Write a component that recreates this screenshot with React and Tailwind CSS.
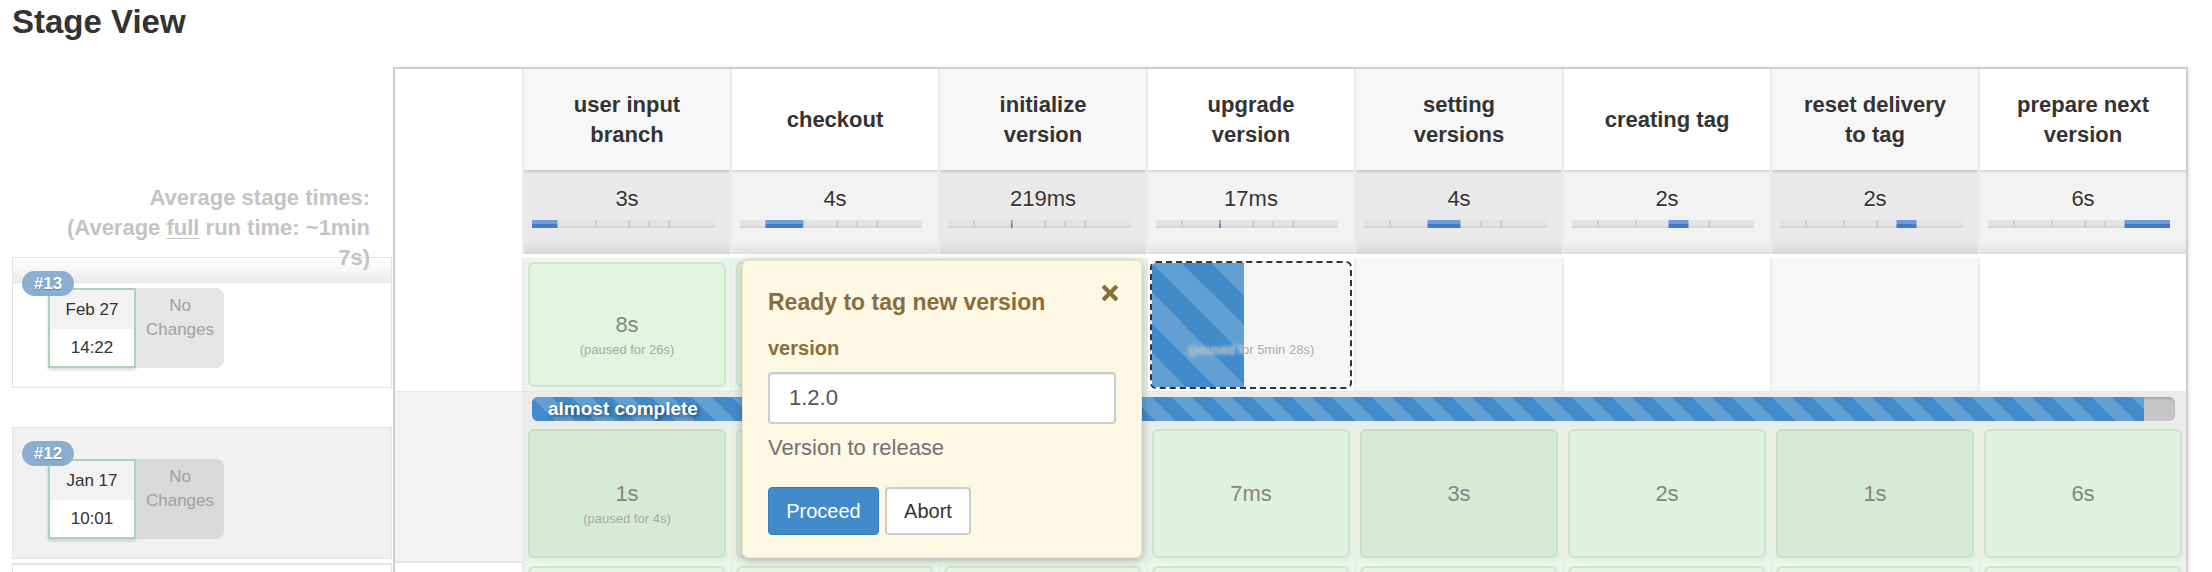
import React from 'react'

const stages = [
  { name: 'user input branch', avg: '3s', from: 0, to: 14 },
  { name: 'checkout', avg: '4s', from: 14, to: 34.6 },
  { name: 'initialize version', avg: '219ms', from: 34.6, to: 34.8 },
  { name: 'upgrade version', avg: '17ms', from: 34.8, to: 35 },
  { name: 'setting versions', avg: '4s', from: 35, to: 53 },
  { name: 'creating tag', avg: '2s', from: 53, to: 64 },
  { name: 'reset delivery to tag', avg: '2s', from: 64, to: 75 },
  { name: 'prepare next version', avg: '6s', from: 75, to: 100 }
]

const ticks = [14, 34.7, 53, 64, 75]

// cols 2 and 3 sit under the input popup
const run12 = [
  { d: '1s', p: '(paused for 4s)' },
  { d: '' },
  { d: '' },
  { d: '7ms' },
  { d: '3s' },
  { d: '2s' },
  { d: '1s' },
  { d: '6s' }
]

const stripes =
  'bg-[#428bca] bg-[linear-gradient(45deg,rgba(255,255,255,.17)_25%,transparent_25%,transparent_50%,rgba(255,255,255,.17)_50%,rgba(255,255,255,.17)_75%,transparent_75%,transparent)]'

function AvgBar({ from, to }) {
  const w = 182
  return (
    <svg width={w} height="8" className="block">
      <rect width={w} height="8" fill="#e3e3e3" />
      <rect y="6" width={w} height="2" fill="#d6d6d6" />
      {ticks
        .filter((t) => t < from || t > to)
        .map((t) => (
          <rect key={t} x={(t * w) / 100} y="1" width="1.2" height="6" fill="#c2c2c2" />
        ))}
      <rect x={(from * w) / 100} width={Math.max(((to - from) * w) / 100, 1.5)} height="4" fill="#6f9ddb" />
      <rect x={(from * w) / 100} y="4" width={Math.max(((to - from) * w) / 100, 1.5)} height="4" fill="#4479c4" />
    </svg>
  )
}

function BuildRow({ num, date, time, band, shaded }) {
  return (
    <div
      className={`relative w-[380px] border border-[#e3e3e3] ${
        shaded ? 'h-[132px] bg-[#f1f1f1]' : 'h-[131px] bg-white'
      }`}
    >
      {band && <div className="h-[25px] border-b border-[#e2e2e2] bg-gradient-to-b from-white to-[#ededed]" />}

      <span className="absolute left-[9px] top-[13px] z-10 flex h-[25px] w-[52px] items-center justify-center rounded-full bg-[#8aaed2] text-[17px] font-bold text-white [text-shadow:0_1px_1px_rgba(0,0,0,0.25)]">
        {num}
      </span>

      <div className={`ml-[35px] flex ${band ? 'mt-[5px]' : 'mt-[31px]'}`}>
        <div className="w-[88px] border-2 border-[#a8d4b9] bg-white text-center text-[17px] text-[#333] shadow-[0_2px_3px_rgba(0,0,0,0.15)]">
          <div className="h-[39px] bg-[#f2f2f2] leading-[39px]">{date}</div>
          <div className="h-[37px] leading-[37px]">{time}</div>
        </div>
        <div
          className={`h-[80px] w-[88px] rounded-r-[8px] pt-[6px] text-center text-[17px] leading-[24px] text-[#a0a0a0] ${
            shaded ? 'bg-[#d9d9d9]' : 'bg-[#e6e6e6]'
          }`}
        >
          No
          <br />
          Changes
        </div>
      </div>
    </div>
  )
}

function StageBox({ d, p, dark, light }) {
  return (
    <div
      className={`grid h-full grid-rows-[1fr_auto_1fr] rounded-[6px] border-2 text-center ${
        light
          ? 'border-[#d4e2d4] bg-[#e1f5e1]'
          : dark
            ? 'border-[#cddacd] bg-[#d6ebd6]'
            : 'border-[#d2dfd2] bg-[#dff2df]'
      }`}
    >
      <div />
      <div className="h-[26px] text-[22px] leading-[26px] text-[#858585]">{d}</div>
      <div className="pt-[3px] text-[13px] leading-[18px] text-[#a8a8a8]">{p}</div>
    </div>
  )
}

function PausedBox() {
  return (
    <div className="grid h-full overflow-hidden rounded-[6px] border-2 border-dashed border-[#333] bg-[#f5f5f5]">
      <div className={`[grid-area:1/1] h-full w-[46.5%] ${stripes} bg-[length:60px_60px]`} />
      <div className="[grid-area:1/1] grid grid-rows-[1fr_auto_1fr] text-center">
        <div />
        <div className="h-[26px]" />
        <div className="pt-[3px] text-[13px] leading-[18px] text-[#aaa] [text-shadow:0_0_4px_rgba(255,255,255,0.95)]">
          (paused for 5min 28s)
        </div>
      </div>
    </div>
  )
}

function Popup() {
  return (
    <div className="absolute left-[347px] top-[191px] z-20 h-[298px] w-[400px] rounded-[6px] border border-[#f1e7c4] bg-[#fcf8e3] px-[25px] pt-[27px] shadow-[0_2px_10px_rgba(0,0,0,0.28)]">
      <svg
        width="16"
        height="16"
        viewBox="0 0 16 16"
        className="absolute right-[23px] top-[24px]"
      >
        <path d="M2.5 2.5 L13.5 13.5 M13.5 2.5 L2.5 13.5" stroke="#8a6d3b" strokeWidth="4.2" strokeLinecap="square" />
      </svg>

      <h3 className="text-[23px] font-bold leading-[28px] text-[#8a6d3b]">Ready to tag new version</h3>

      <p className="mt-[20px] text-[20px] font-bold leading-[24px] text-[#8a6d3b]">version</p>

      <input
        readOnly
        defaultValue="1.2.0"
        className="mt-[12px] block h-[52px] w-[348px] rounded-[4px] border-2 border-[#cccccc] bg-white px-[19px] text-[22px] text-[#555] shadow-[inset_0_1px_1px_rgba(0,0,0,0.075)] outline-none"
      />

      <p className="mt-[10px] text-[22px] leading-[28px] text-[#737373]">Version to release</p>

      <div className="mt-[25px] flex gap-[6px]">
        <button className="h-[48px] w-[111px] rounded-[4px] border border-[#357ebd] bg-[#428bca] text-[20px] text-white">
          Proceed
        </button>
        <button className="h-[48px] w-[86px] rounded-[4px] border-2 border-[#cccccc] bg-white text-[20px] text-[#333]">
          Abort
        </button>
      </div>
    </div>
  )
}

function StageTable() {
  const grid = 'grid grid-cols-[127px_repeat(8,208px)]'
  const sep = 'border-l-2 border-[#ececec]'

  return (
    <div className="relative w-[1795px] shrink-0 border-x-2 border-t-2 border-[#cfcfcf] shadow-[2px_0_3px_rgba(0,0,0,0.08)]">
      {/* stage names */}
      <div className={`${grid} h-[101px]`}>
        <div className="bg-white" />
        {stages.map((s, i) => (
          <div
            key={s.name}
            className={`${sep} flex items-center justify-center px-[24px] text-center text-[22px] font-bold leading-[30px] text-[#333] ${
              i % 2 === 0 ? 'bg-[#f7f7f7]' : 'bg-white'
            }`}
          >
            {s.name}
          </div>
        ))}
      </div>

      {/* average times */}
      <div className={`${grid} h-[84px]`}>
        <div className="bg-white" />
        {stages.map((s, i) => (
          <div
            key={s.name}
            className={`${sep} flex flex-col pt-[16px] shadow-[inset_0_5px_3px_-3px_rgba(0,0,0,0.13),inset_0_-14px_12px_-10px_rgba(0,0,0,0.1)] ${
              i % 2 === 0 ? 'bg-[#e9e9e9]' : 'bg-[#f2f2f2]'
            }`}
          >
            <span className="text-center text-[22px] leading-[26px] text-[#333] [text-shadow:0_1px_0_#fff]">{s.avg}</span>
            <div className="ml-[8px] mt-[8px]">
              <AvgBar from={s.from} to={s.to} />
            </div>
          </div>
        ))}
      </div>

      {/* run #13 */}
      <div className={`${grid} mt-[4px] h-[134px] border-b border-[#e6e6e6]`}>
        <div className="bg-white" />
        {[0, 1, 2].map((i) => (
          <div key={i} className={`${sep} bg-[#eaf6ea] p-[4px]`}>
            <StageBox light d={i === 0 ? '8s' : ''} p={i === 0 ? '(paused for 26s)' : ''} />
          </div>
        ))}
        <div className={`${sep} bg-white px-[2px] pb-[2px] pt-[3px]`}>
          <PausedBox />
        </div>
        {[4, 5, 6, 7].map((i) => (
          <div key={i} className={`${sep} ${i % 2 === 0 ? 'bg-[#f7f7f7]' : 'bg-white'}`} />
        ))}
      </div>

      {/* progress */}
      <div className={`${grid} h-[33px]`}>
        <div className="bg-[#f2f2f2]" />
        <div className="col-span-8 bg-[#ebebeb] pl-[10px] pr-[11px] pt-[5px]">
          <div className="flex h-[24px] overflow-hidden rounded-[6px] bg-[#c6c6c6] shadow-[inset_0_2px_2px_rgba(0,0,0,0.15)]">
            <div
              className={`flex h-full w-[98.1%] items-center pl-[16px] text-[19px] font-bold text-white ${stripes} bg-[length:40px_40px] [text-shadow:2px_2px_4px_rgba(0,0,0,0.55)]`}
            >
              almost complete
            </div>
          </div>
        </div>
      </div>

      {/* run #12 */}
      <div className={`${grid} h-[136px]`}>
        <div className="bg-[#f2f2f2]" />
        {run12.map((r, i) => (
          <div key={i} className={`${sep} bg-[#e5f1e5] px-[4px] pb-[3px] pt-[4px]`}>
            <StageBox d={r.d} p={r.p} dark={i % 2 === 0} />
          </div>
        ))}
      </div>

      {/* run #11 (cut off) */}
      <div className={`${grid} h-[30px]`}>
        <div className="border-t-2 border-[#e6e6e6] bg-white" />
        {stages.map((s) => (
          <div key={s.name} className={`${sep} bg-[#eaf6ea] px-[4px] pt-[5px]`}>
            <div className="h-[40px] rounded-[6px] border-2 border-[#d4e2d4] bg-[#e1f5e1]" />
          </div>
        ))}
      </div>

      <Popup />
    </div>
  )
}

export default function App() {
  return (
    <div className="h-[572px] w-[2212px] overflow-hidden bg-white pl-[12px] font-['Liberation_Sans',Arial,sans-serif] text-[#333]">
      <h1 className="h-[67px] pt-[2px] text-[33px] font-bold leading-[40px] text-[#333]">Stage View</h1>

      <div className="flex">
        <div className="w-[381px] shrink-0">
          <div className="relative z-10 h-[190px] pr-[23px] pt-[116px] text-right text-[22px] font-bold leading-[30px] text-[#c4c4c4]">
            Average stage times:
            <br />
            (Average <span className="underline decoration-1 underline-offset-[3px]">full</span> run time: ~1min
            <br />
            7s)
          </div>

          <BuildRow num="#13" date="Feb 27" time="14:22" band />
          <div className="h-[39px]" />
          <BuildRow num="#12" date="Jan 17" time="10:01" shaded />
          <div className="h-[4px]" />
          <div className="h-[20px] w-[380px] border-x border-t-2 border-[#e3e3e3] bg-white" />
        </div>

        <StageTable />
      </div>
    </div>
  )
}
